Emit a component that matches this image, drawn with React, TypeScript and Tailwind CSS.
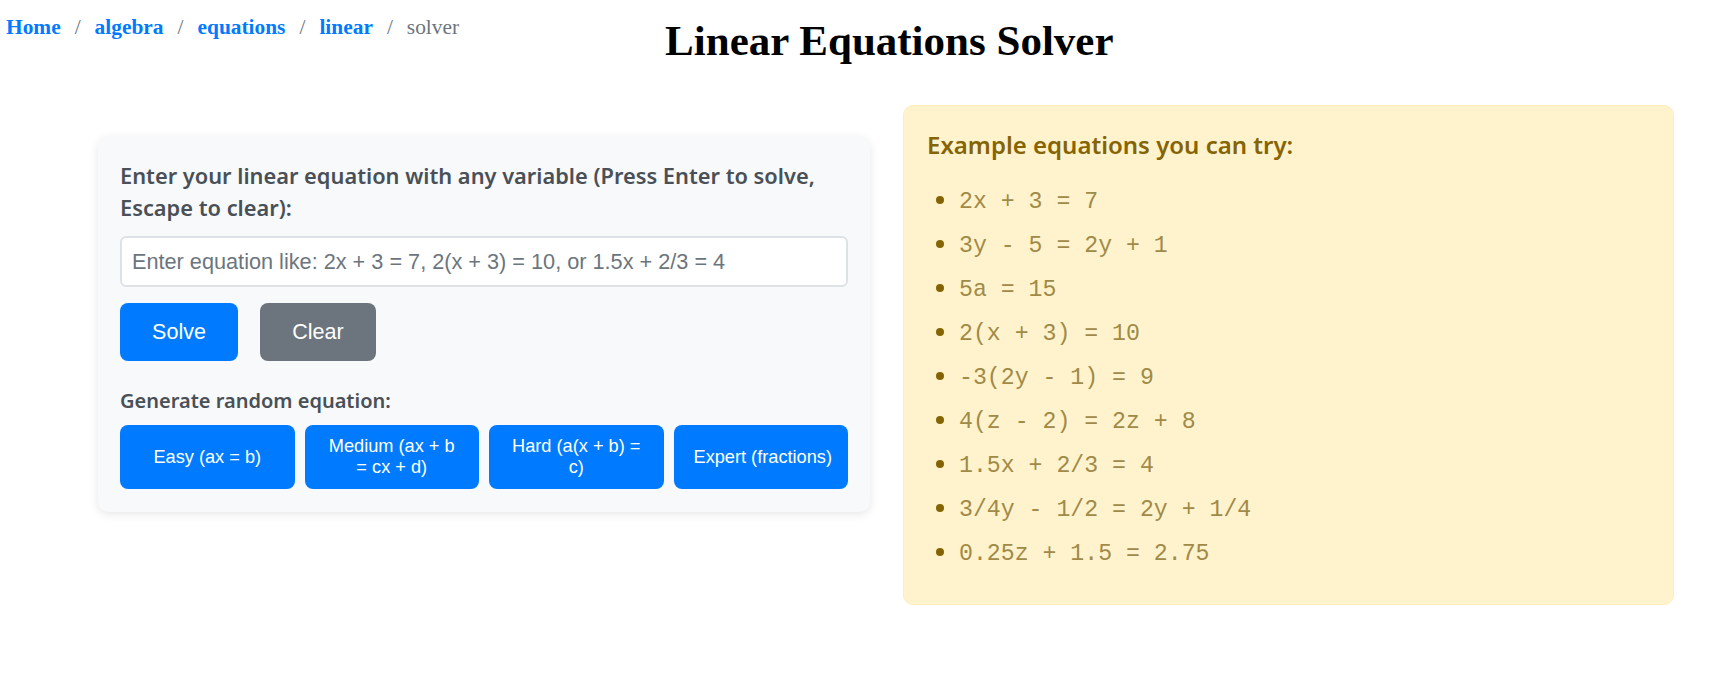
import React, { useState } from 'react';

const examples = [
  '2x + 3 = 7',
  '3y - 5 = 2y + 1',
  '5a = 15',
  '2(x + 3) = 10',
  '-3(2y - 1) = 9',
  '4(z - 2) = 2z + 8',
  '1.5x + 2/3 = 4',
  '3/4y - 1/2 = 2y + 1/4',
  '0.25z + 1.5 = 2.75',
];

const crumbs = ['Home', 'algebra', 'equations', 'linear'];

const difficulties = [
  { label: 'Easy (ax = b)', nowrap: false },
  { label: 'Medium (ax + b = cx + d)', nowrap: false },
  { label: 'Hard (a(x + b) = c)', nowrap: false },
  { label: 'Expert (fractions)', nowrap: true },
];

const App: React.FC = () => {
  const [equation, setEquation] = useState('');

  return (
    <div className="min-h-[673px] bg-white">
      {/* header: breadcrumb + title */}
      <div className="flex items-start">
        <nav className="flex items-center pl-[6px] pt-[11px] text-[21.4px] font-['Liberation_Serif',serif]">
          {crumbs.map((c) => (
            <React.Fragment key={c}>
              <a href="#" className="font-bold text-[#007bff]">{c}</a>
              <span className="mx-[14px] text-[#6c757d]">/</span>
            </React.Fragment>
          ))}
          <span className="text-[#6c757d]">solver</span>
        </nav>
        <h1 className="ml-[206px] pt-[14px] text-[43px] font-bold leading-[54px] text-black font-['Liberation_Serif',serif]">
          Linear Equations Solver
        </h1>
      </div>

      <div className="mt-[37px] flex items-start gap-[33px] pl-[98px] pr-[54px]">
        {/* solver card */}
        <div className="mt-[32px] w-[772px] rounded-[10px] bg-[#f8f9fa] px-[22px] pt-[23px] pb-[23px] shadow-[0_2px_10px_rgba(0,0,0,0.1)] font-['Noto_Sans',sans-serif]">
          <label className="block text-[21.8px] font-semibold leading-[32px] text-[#495057]">
            Enter your linear equation with any variable (Press Enter to solve, Escape to clear):
          </label>
          <input
            value={equation}
            onChange={(e) => setEquation(e.target.value)}
            placeholder="Enter equation like: 2x + 3 = 7, 2(x + 3) = 10, or 1.5x + 2/3 = 4"
            className="mt-[12px] block h-[51px] w-full rounded-[6px] border-2 border-[#dee2e6] bg-white px-[10px] text-[21.7px] text-[#212529] placeholder:text-[#6c757d] font-['Liberation_Sans',sans-serif] outline-none"
          />
          <div className="mt-[16px] flex gap-[22px] font-['Liberation_Sans',sans-serif]">
            <button className="h-[58px] w-[118px] rounded-[8px] bg-[#007bff] text-[21.5px] text-white">Solve</button>
            <button className="h-[58px] w-[116px] rounded-[8px] bg-[#6c757d] text-[21.5px] text-white">Clear</button>
          </div>
          <p className="mt-[25px] text-[20px] font-semibold leading-[30px] text-[#495057]">Generate random equation:</p>
          <div className="mt-[9px] grid grid-cols-4 gap-[10px] font-['Liberation_Sans',sans-serif]">
            {difficulties.map((d) => (
              <button
                key={d.label}
                className={`h-[64px] rounded-[8px] bg-[#007bff] px-[20px] text-[18.2px] leading-[21px] text-white ${
                  d.nowrap ? 'whitespace-nowrap' : ''
                }`}
              >
                {d.label}
              </button>
            ))}
          </div>
        </div>

        {/* examples */}
        <div className="w-[771px] rounded-[10px] border border-[#ffeeba] bg-[#fff3cd] px-[23px] pt-[22px] pb-[31px]">
          <h3 className="text-[24px] font-semibold leading-[34px] text-[#856404] font-['Noto_Sans',sans-serif]">
            Example equations you can try:
          </h3>
          <ul className="mt-[15px] list-disc pl-[32px] text-[23px] text-[#856404] marker:text-[#856404]">
            {examples.map((ex) => (
              <li key={ex} className="h-[44px] leading-[44px]">
                <code className="text-[23.2px] text-[#a08a48] font-['Liberation_Mono',monospace]">{ex}</code>
              </li>
            ))}
          </ul>
        </div>
      </div>
    </div>
  );
};

export default App;
